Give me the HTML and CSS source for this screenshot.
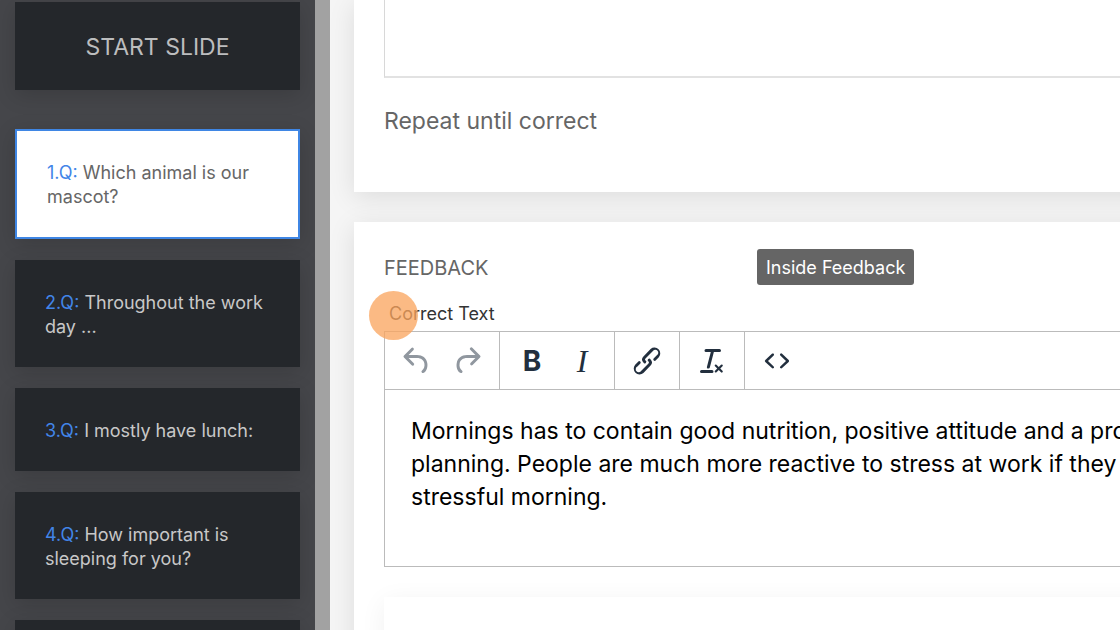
FILE: index.html
```
<!DOCTYPE html>
<html lang="en">
<head>
    <meta charset="UTF-8">
    <meta name="viewport" content="width=device-width, initial-scale=1.0">
    <title>Quiz Editor</title>
    <link rel="stylesheet" href="styles.css">
</head>
<body>
    <!-- Slide list -->
    <nav class="sidebar">
        <button type="button" class="slide slide-start">START SLIDE</button>
        <button type="button" class="slide active"><span class="number">1.Q:</span> Which animal is our mascot?</button>
        <button type="button" class="slide"><span class="number">2.Q:</span> Throughout the work day ...</button>
        <button type="button" class="slide"><span class="number">3.Q:</span> I mostly have lunch:</button>
        <button type="button" class="slide"><span class="number">4.Q:</span> How important is sleeping for you?</button>
        <button type="button" class="slide" aria-label="Next slide"></button>
    </nav>

    <main class="content">
        <section class="card card-answers">
            <textarea class="answer-box" aria-label="Answer"></textarea>
            <p class="repeat">Repeat until correct</p>
        </section>

        <!-- Feedback -->
        <section class="card card-feedback">
            <h2>FEEDBACK</h2>
            <div class="tooltip">Inside Feedback</div>
            <div class="field">
                <label for="correct-text">Correct Text</label>
                <span class="pointer"></span>
            </div>
            <div class="editor">
                <div class="toolbar">
                    <div class="group">
                        <button type="button" aria-label="Undo" disabled>
                            <svg viewBox="0 0 24 24"><path d="M6.4 8H12c3.7 0 6.2 2 6.8 5.1.6 2.7-.4 5.6-2.3 6.8a1 1 0 0 1-1-1.8c1.1-.6 1.8-2.7 1.4-4.6-.5-2.1-2.1-3.5-4.9-3.5H6.4l3.3 3.3a1 1 0 1 1-1.4 1.4l-5-5a1 1 0 0 1 0-1.4l5-5a1 1 0 0 1 1.4 1.4L6.4 8Z"/></svg>
                        </button>
                        <button type="button" aria-label="Redo" disabled>
                            <svg viewBox="0 0 24 24"><path d="M17.6 10H12c-2.8 0-4.4 1.4-4.9 3.5-.4 2 .3 4 1.4 4.6a1 1 0 1 1-1 1.8c-2-1.2-2.9-4.1-2.3-6.8.6-3 3-5.1 6.8-5.1h5.6l-3.3-3.3a1 1 0 1 1 1.4-1.4l5 5a1 1 0 0 1 0 1.4l-5 5a1 1 0 0 1-1.4-1.4l3.3-3.3Z"/></svg>
                        </button>
                    </div>
                    <div class="group">
                        <button type="button" class="bold" aria-label="Bold">B</button>
                        <button type="button" class="italic" aria-label="Italic">I</button>
                    </div>
                    <div class="group">
                        <button type="button" aria-label="Insert link">
                            <svg viewBox="0 0 24 24"><path d="M6.2 12.3a1 1 0 0 1 1.4 1.4l-2 2a2 2 0 1 0 2.6 2.8l4.8-4.8a1 1 0 0 0 0-1.4 1 1 0 1 1 1.4-1.3 2.9 2.9 0 0 1 0 4L9.6 20a3.9 3.9 0 0 1-5.5-5.5l2-2Zm11.6-.6a1 1 0 0 1-1.4-1.4l2-2a2 2 0 1 0-2.6-2.8L11 10.3a1 1 0 0 0 0 1.4A1 1 0 1 1 9.6 13a2.9 2.9 0 0 1 0-4L14.4 4a3.9 3.9 0 0 1 5.5 5.5l-2 2Z"/></svg>
                        </button>
                    </div>
                    <div class="group">
                        <button type="button" aria-label="Clear formatting">
                            <svg viewBox="0 0 24 24"><path d="M13.2 6a1 1 0 0 1 0 .2l-2.6 10a1 1 0 0 1-1 .8h-.2a.8.8 0 0 1-.8-1l2.6-10H8a1 1 0 1 1 0-2h9a1 1 0 0 1 0 2h-3.8ZM5 18h7a1 1 0 0 1 0 2H5a1 1 0 0 1 0-2Zm13 1.5L16.5 18 15 19.5a.7.7 0 0 1-1-1l1.5-1.5-1.5-1.5a.7.7 0 0 1 1-1l1.5 1.5 1.5-1.5a.7.7 0 0 1 1 1L17.5 17l1.5 1.5a.7.7 0 0 1-1 1Z"/></svg>
                        </button>
                    </div>
                    <div class="group">
                        <button type="button" aria-label="Source code">
                            <svg viewBox="0 0 24 24"><path d="M9.8 15.7c.3.3.3.8 0 1-.3.4-.9.4-1.2 0l-4.4-4.1a.8.8 0 0 1 0-1.2l4.4-4.2c.3-.3.9-.3 1.2 0 .3.3.3.8 0 1.1L6 12l3.8 3.7ZM14.2 15.7c-.3.3-.3.8 0 1 .4.4.9.4 1.2 0l4.4-4.1c.3-.3.3-.8 0-1.2l-4.4-4.2a.8.8 0 0 0-1.2 0c-.3.3-.3.8 0 1.1L18 12l-3.8 3.7Z"/></svg>
                        </button>
                    </div>
                </div>
                <textarea id="correct-text" wrap="off">Mornings has to contain good nutrition, positive attitude and a pro
planning. People are much more reactive to stress at work if they
stressful morning.</textarea>
            </div>
            <div class="panel"></div>
        </section>
    </main>
</body>
</html>
```

FILE: styles.css
```
* {
    box-sizing: border-box;
}

body {
    display: flex;
    height: 100vh;
    margin: 0;
    overflow: hidden;
    font-family: Inter, sans-serif;
    color: #666;
}

button,
textarea {
    font-family: inherit;
    margin: 0;
}

/* Sidebar */
.sidebar {
    display: flex;
    flex-direction: column;
    flex: none;
    gap: 21px;
    width: 330px;
    padding: 2px 15px 0;
    overflow: hidden;
    background: #45464a;
    border-right: 15px solid #a2a2a2;
}

.slide {
    flex: none;
    min-height: 83px;
    padding: 31px 30px 28px;
    border: none;
    background: #24272b;
    box-shadow: 0 5px 20px rgba(0, 0, 0, 0.15);
    color: #c8c8c8;
    font-size: 18px;
    line-height: 24px;
    text-align: left;
    cursor: pointer;
}

.slide-start {
    margin-bottom: 18px;
    padding: 33px 30px 31px;
    color: #bcbdbe;
    font-size: 23px;
    text-align: center;
}

.slide.active {
    padding: 30px 30px 28px;
    border: 2px solid #3f86e4;
    background: #fff;
    color: #666;
}

.number {
    color: #4285e8;
}

/* Content */
.content {
    flex: 1;
    min-width: 0;
    padding-left: 24px;
    overflow: hidden;
    background: #f5f5f5;
}

.card {
    position: relative;
    margin-right: -60px;
    padding: 0 30px;
    background: #fff;
    box-shadow: 0 5px 25px rgba(0, 0, 0, 0.1);
}

.card-answers {
    margin-bottom: 30px;
    padding-bottom: 54px;
}

.answer-box {
    display: block;
    width: 100%;
    height: 78px;
    border: 1px solid #d8d8d8;
    border-top: none;
    border-bottom: 2px solid #e2e2e2;
    resize: none;
}

.repeat {
    margin: 0;
    padding-top: 27px;
    font-size: 23px;
    line-height: 33px;
}

.card-feedback {
    padding-top: 34px;
    padding-bottom: 30px;
}

.card h2 {
    margin: 0;
    font-size: 20px;
    font-weight: 400;
    line-height: 24px;
}

.tooltip {
    position: absolute;
    top: 27px;
    left: 403px;
    padding: 7px 9px 5px;
    border-radius: 3px;
    background: #656565;
    color: #fff;
    font-size: 18px;
    line-height: 24px;
}

.field {
    position: relative;
    padding: 22px 5px 5px;
    color: #333;
    font-size: 18px;
    line-height: 24px;
}

.field label {
    display: block;
}

.pointer {
    position: absolute;
    top: 11px;
    left: -15px;
    width: 49px;
    height: 49px;
    border-radius: 50%;
    background: rgba(250, 164, 93, 0.76);
    z-index: 1;
}

/* Editor */
.editor {
    border: 1px solid #bbb;
}

.toolbar {
    display: flex;
    border-bottom: 1px solid #bbb;
}

.group {
    display: flex;
    padding: 4px 7px 3px;
    border-right: 1px solid #bbb;
}

.group:last-child {
    border-right: none;
}

.group button {
    display: flex;
    align-items: center;
    justify-content: center;
    width: 50px;
    height: 50px;
    padding: 0;
    border: none;
    background: none;
    color: #222f3e;
}

.group button:disabled {
    color: #90979f;
}

.group svg {
    width: 36px;
    height: 36px;
    fill: currentColor;
}

.group .bold {
    font-size: 28px;
    font-weight: 700;
}

.group .italic {
    font-family: "Liberation Serif", serif;
    font-size: 32px;
    font-style: italic;
}

.editor textarea {
    display: block;
    width: 100%;
    height: 176px;
    padding: 25px 26px;
    border: none;
    outline: none;
    overflow: hidden;
    resize: none;
    color: #000;
    font-size: 23px;
    line-height: 33px;
}

.panel {
    height: 120px;
    margin-top: 30px;
    background: #fff;
    box-shadow: 0 5px 25px rgba(0, 0, 0, 0.06);
}
```
